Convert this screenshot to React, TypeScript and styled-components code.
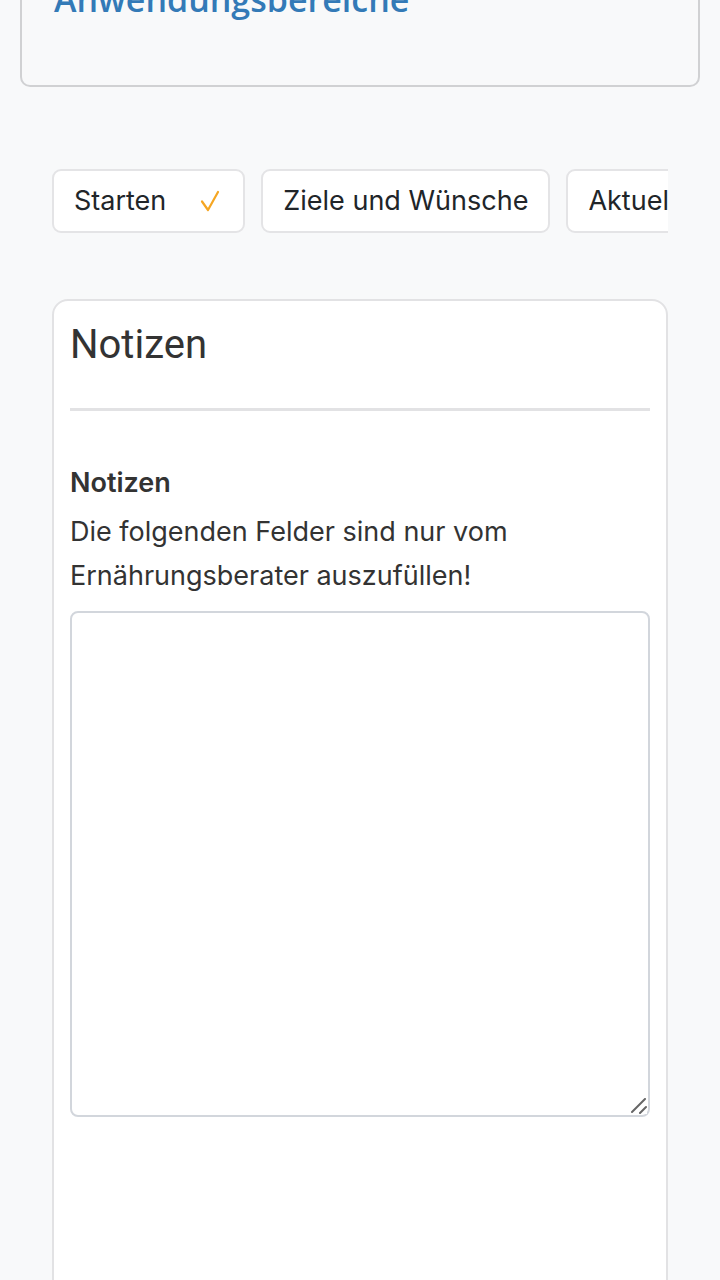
import React from 'react';
import styled, { createGlobalStyle } from 'styled-components';

const GlobalStyle = createGlobalStyle`
  html, body {
    margin: 0;
    padding: 0;
    background: #f8f9fa;
  }

  body {
    font-family: Inter, "Noto Sans", sans-serif;
    color: #212529;
    overflow: hidden;
  }

  * {
    box-sizing: border-box;
  }
`;

const Page = styled.div`
  display: flex;
  flex-direction: column;
  padding: 0 20px;
`;

const AreaCard = styled.section`
  margin-top: -51px;
  padding: 28px 32px 65px;
  border: 2px solid #d0d1d3;
  border-radius: 10px;
  background: #f8f9fa;
`;

const AreaTitle = styled.h2`
  margin: 0;
  font-family: "Open Sans", "Noto Sans", sans-serif;
  font-size: 34px;
  font-weight: 600;
  line-height: 1.2;
  color: #337ab7;
`;

const Content = styled.div`
  display: flex;
  flex-direction: column;
  padding: 82px 32px 0;
`;

const StepBar = styled.nav`
  display: flex;
  gap: 16px;
  overflow: hidden;
`;

const StepTab = styled.button<{ $done?: boolean }>`
  flex-shrink: 0;
  display: flex;
  align-items: center;
  gap: 34px;
  height: 64px;
  padding: 0 ${({ $done }) => ($done ? '23px' : '20px')} 0 20px;
  border: 2px solid #e4e4e6;
  border-radius: 9px;
  background: #fff;
  font-family: Inter, "Noto Sans", sans-serif;
  font-size: 27px;
  color: #212529;
  white-space: nowrap;
`;

const Check = styled.svg`
  width: 20px;
  height: 22px;
`;

const NoteCard = styled.section`
  margin-top: 66px;
  height: 1000px;
  padding: 20px 16px;
  border: 2px solid #e2e2e4;
  border-radius: 16px;
  background: #fff;
`;

const NoteHeading = styled.h3`
  margin: 0;
  padding-bottom: 39px;
  border-bottom: 3px solid #e2e2e4;
  font-family: Roboto, "Noto Sans", sans-serif;
  font-size: 40px;
  font-weight: 400;
  line-height: 48px;
  color: #333;
`;

const Field = styled.div`
  display: flex;
  flex-direction: column;
  padding-top: 54px;
`;

const FieldLabel = styled.label`
  font-size: 27px;
  font-weight: 600;
  line-height: 36px;
  color: #333;
`;

const Hint = styled.p`
  margin: 9px 0 13px;
  font-size: 27px;
  line-height: 44px;
  color: #333;
`;

const InputWrap = styled.div`
  position: relative;
`;

const NoteInput = styled.textarea`
  display: block;
  width: 100%;
  height: 506px;
  padding: 12px 16px;
  border: 2px solid #d2d6dc;
  border-radius: 8px;
  background: #fff;
  font-family: Inter, "Noto Sans", sans-serif;
  font-size: 27px;
  resize: vertical;

  &::-webkit-resizer {
    background: transparent;
  }
`;

/* resize grip drawn over the textarea's bottom-right corner */
const Grip = styled.svg`
  position: absolute;
  right: 3px;
  bottom: 3px;
  width: 16px;
  height: 16px;
  background: #fff;
  pointer-events: none;
`;

const steps = [
  { label: 'Starten', done: true },
  { label: 'Ziele und Wünsche', done: false },
  { label: 'Aktueller Zustand', done: false },
  { label: 'Ernährung', done: false },
];

export default function App() {
  return (
    <>
      <GlobalStyle />
      <Page>
        <AreaCard>
          <AreaTitle>Anwendungsbereiche</AreaTitle>
        </AreaCard>

        <Content>
          <StepBar>
            {steps.map((step) => (
              <StepTab key={step.label} type="button" $done={step.done}>
                {step.label}
                {step.done && (
                  <Check viewBox="0 0 20 22" fill="none">
                    <path
                      d="M2 11.5 L8 20 L18 2"
                      stroke="#f5a623"
                      strokeWidth="2.2"
                      strokeLinecap="round"
                      strokeLinejoin="round"
                    />
                  </Check>
                )}
              </StepTab>
            ))}
          </StepBar>

          <NoteCard>
            <NoteHeading>Notizen</NoteHeading>
            <Field>
              <FieldLabel htmlFor="notes">Notizen</FieldLabel>
              <Hint>Die folgenden Felder sind nur vom Ernährungsberater auszufüllen!</Hint>
              <InputWrap>
                <NoteInput id="notes" />
                <Grip viewBox="0 0 16 16" fill="none">
                  <path d="M1 14 L14 1 M9 15 L15 9" stroke="#666" strokeWidth="2" strokeLinecap="round" />
                </Grip>
              </InputWrap>
            </Field>
          </NoteCard>
        </Content>
      </Page>
    </>
  );
}
